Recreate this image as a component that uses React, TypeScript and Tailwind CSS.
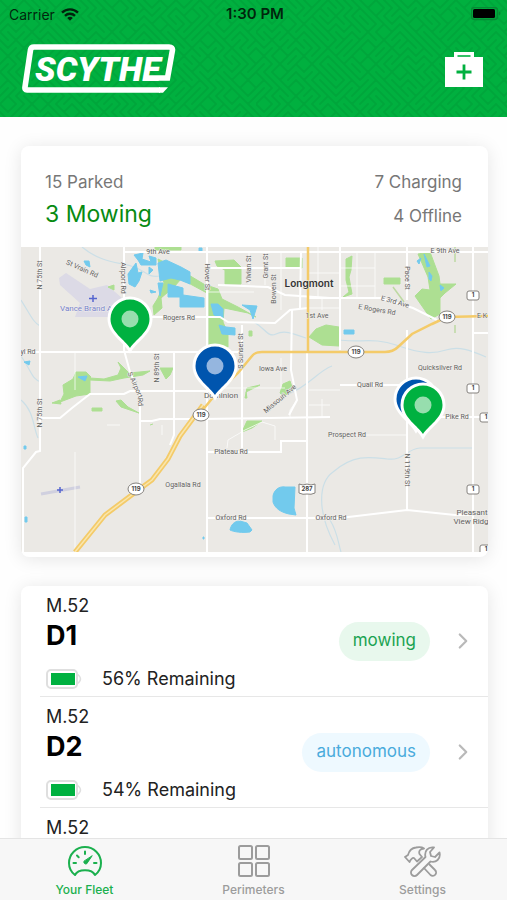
import { ChevronRight } from "lucide-react";
import { clsx } from "clsx";

interface Mower {
  unit: string;
  name?: string;
  battery?: number;
  status?: "mowing" | "autonomous";
}

const mowers: Mower[] = [
  { unit: "M.52", name: "D1", battery: 56, status: "mowing" },
  { unit: "M.52", name: "D2", battery: 54, status: "autonomous" },
  { unit: "M.52" },
];

const statusStyles = {
  mowing: "bg-[#e8f8ed] text-[#1ba352]",
  autonomous: "bg-[#eef9ff] text-[#49abdc]",
};

// [text, x, y, rotation]
const streets: [string, number, number, number][] = [
  ["9th Ave", 158, 252, 0],
  ["E 9th Ave", 445, 251, 0],
  ["St Vrain Rd", 82, 269, 24],
  ["N 75th St", 40, 275, -90],
  ["N 75th St", 40, 413, -90],
  ["Airport Rd", 123, 278, 90],
  ["Rogers Rd", 179, 318, 0],
  ["yl Rd", 28, 352, 0],
  ["N 89th St", 157, 368, -90],
  ["S Airport", 135, 385, 66],
  ["Rd", 140, 402, 85],
  ["Hover St", 207, 277, 90],
  ["Vivian St", 249, 269, -90],
  ["Grant St", 266, 266, -90],
  ["Bowen St", 274, 289, -90],
  ["S Sunset St", 241, 351, -90],
  ["1st Ave", 317, 316, 0],
  ["Iowa Ave", 273, 369, 0],
  ["Missouri Ave", 280, 399, -40],
  ["Pace St", 407, 278, 90],
  ["E 3rd Ave", 395, 302, 16],
  ["E Rogers Rd", 377, 310, 10],
  ["Quicksilver Rd", 440, 368, 0],
  ["Quail Rd", 370, 385, 0],
  ["Pike Rd", 457, 417, 0],
  ["Prospect Rd", 347, 435, 0],
  ["Plateau Rd", 231, 452, 0],
  ["Ogallala Rd", 183, 485, 0],
  ["Oxford Rd", 231, 518, 0],
  ["Oxford Rd", 331, 518, 0],
  ["N 119th St", 407, 470, 90],
  ["E K", 482, 316, 0],
];

const stateShields = [[201, 415], [136, 489], [356, 352], [447, 317]];
const countyShields = [[473, 295], [473, 388], [473, 489], [486, 417], [486, 549]];

// Maze of short diagonals, one stroke per cell
function mazePath(cols: number, rows: number, cell: number) {
  let seed = 29;
  let d = "";
  for (let r = 0; r < rows; r++) {
    for (let c = 0; c < cols; c++) {
      seed = (seed * 16807) % 2147483647;
      const x = c * cell;
      const y = r * cell;
      d += seed / 2147483647 < 0.5
        ? `M${x} ${y}l${cell} ${cell}`
        : `M${x + cell} ${y}l${-cell} ${cell}`;
    }
  }
  return d;
}

const maze = mazePath(32, 16, 8);

function StatusBar() {
  return (
    <div className="grid grid-cols-3 items-center h-7 pl-[9px] pr-[6px] text-[14px] text-black/80">
      <div className="flex items-center gap-[6px]">
        <span>Carrier</span>
        <svg width="18" height="13" viewBox="0 0 18 13" fill="none" stroke="currentColor" strokeWidth="2.4">
          <path d="M1 4.7C5.5.3 12.500.3 17 4.700" />
          <path d="M4 7.800C6.800 5 11.200 5 14 7.800" />
          <path d="M9 12.800L6.200 9.900C7.800 8.400 10.200 8.400 11.800 9.900Z" fill="currentColor" stroke="none" />
        </svg>
      </div>
      <span className="text-center text-[15px] font-semibold whitespace-nowrap">1:30 PM</span>
      <svg className="justify-self-end" width="30" height="14" viewBox="0 0 30 14">
        <rect x="0.500" y="0.500" width="26" height="12" rx="3" fill="none" stroke="#078935" strokeWidth="1.500" />
        <rect x="2" y="2" width="22" height="9" rx="1.500" fill="#000" />
        <path d="M28 4.500v4c2-.8 2-3.200 0-4" fill="#078935" />
      </svg>
    </div>
  );
}

function Logo() {
  return (
    <svg width="154" height="50" viewBox="0 0 154 50" role="img" aria-label="Scythe">
      <path
        d="M138 46H5Q2.500 46 3 43L8.500 6Q9 3 12 3H147Q151 3 150.400 6.500L145.500 34H124"
        fill="none"
        stroke="#fff"
        strokeWidth="5.600"
      />
      <path d="M137 43.200H146L141 48.800H137Z" fill="#fff" />
      <text
        x="13"
        y="37"
        fontFamily="Roboto, sans-serif"
        fontSize="34"
        fontWeight="900"
        fontStyle="italic"
        fill="#fff"
      >
        SCYTHE
      </text>
    </svg>
  );
}

function Header() {
  return (
    <header className="relative shrink-0 h-[117px] bg-[#00b03f] overflow-hidden">
      <svg className="absolute inset-0 w-full h-full" aria-hidden="true">
        <defs>
          <pattern id="maze" width="256" height="128" patternUnits="userSpaceOnUse">
            <path d={maze} stroke="#00a63b" strokeWidth="2" strokeLinecap="round" />
          </pattern>
        </defs>
        <rect width="100%" height="100%" fill="url(#maze)" />
      </svg>
      <div className="relative">
        <StatusBar />
        <div className="flex items-center justify-between pt-4 pl-[22px] pr-6">
          <Logo />
          <button type="button" aria-label="Service">
            <svg width="38" height="35" viewBox="0 0 38 35">
              <path d="M0 5H9V0H29V5H38V35H0Z" fill="#fff" />
              <path d="M12.500 4H25.500" stroke="#00b03f" strokeWidth="1.600" />
              <path d="M19 12.500V27.500M11.500 20H26.500" stroke="#00b03f" strokeWidth="2.800" />
            </svg>
          </button>
        </div>
      </div>
    </header>
  );
}

function Pin({ x, y, color, dot }: { x: number; y: number; color: string; dot: string }) {
  return (
    <g transform={`translate(${x} ${y})`}>
      <path
        d="M0 29C-5 21-19.500 13-19.500 0A19.500 19.500 0 0 1 19.500 0C19.500 13 5 21 0 29Z"
        fill={color}
        stroke="#fff"
        strokeWidth="6"
        paintOrder="stroke"
      />
      <circle r="8.500" fill={dot} />
    </g>
  );
}

function FleetMap() {
  return (
    <svg className="block w-full h-auto" viewBox="21 247 467 305" role="img" aria-label="Fleet map">
      <rect x="21" y="247" width="467" height="305" fill="#ebe9e5" />

      {/* airports */}
      <path d="M59 278L66 273L90 289L107 285L122 298L124 317H75L80 303L60 285Z" fill="#dcdae6" />
      <path d="M41 494L80 487" stroke="#d0d0df" strokeWidth="3" />
      <path d="M93 295v7M89 298.500h8M60 487v6M57 490h6" stroke="#5565cf" strokeWidth="1.500" />

      {/* streams */}
      <g fill="none" stroke="#cbdfe7" strokeWidth="1.200">
        <path d="M21 300C31 316 33 322 40 326M21 356C31 370 32 380 41 382M21 400C34 411 33 427 38 438" />
        <path d="M82 247C100 262 116 262 131 266S146 278 160 276" />
        <path d="M254 322C266 329 268 338 276 334S292 333 306 338M332 366C318 371 308 387 288 394M330 338C355 345 371 336 396 345S433 354 446 350S470 350 486 357" />
        <path d="M335 545C316 510 319 482 333 472C354 454 370 457 387 459S406 449 420 448H472M330 520C338 533 338 543 341 552" />
      </g>

      {/* parks */}
      <g fill="#addf92" stroke="#addf92" strokeWidth="1" strokeLinejoin="round">
        <path d="M155 247H181V250H155ZM158 259L182 271L207 286V293L181 279L174 287L161 298L162 308L154 315L153 306L158 298L164 283Z" />
        <path d="M215 261L234 260L241 267V284H225V270L217 266ZM286 258H302V268H286Z" />
        <path d="M209 286L218 289L222 299L238 307L256 317L248 313L224 308L223 322L228 334V347H209Z" />
        <path d="M346 259L352 256L351 270L349 277L352 294L343 297L349 292L346 280ZM384 278H400V284H384Z" />
        <path d="M418 254L430 252L439 276L440 284L456 284L445 293L440 298V314L431 319L415 296L422 289L430 290L428 277Z" />
        <path d="M309 337L316 329L326 325L339 327V346L322 345Z" />
        <path d="M73 379L76 372H86L91 377L90 378L104 379L118 375L121 368L118 362L126 370L129 373L150 371L143 375L124 378L110 381L90 380V394L76 396L60 402L64 394L63 385Z" />
        <path d="M160 368H173L170 375L166 379ZM108 287L114 285V290ZM52 403L60 400L61 404ZM92 408H102V411H92ZM116 401L121 407L139 413L128 407L121 400ZM150 425L153 424" />
        <path d="M283 384L290 381L293 390L284 396L280 393ZM247 388L260 385L246 392L247 398H245ZM242 432L247 421L262 421L252 428ZM249 331H252V336H249Z" />
      </g>
      <path d="M393 287L404 302M455 247V262M455 325V333" stroke="#bdd9a2" strokeWidth="1.500" />

      {/* water */}
      <g fill="#72caed" stroke="#72caed" strokeWidth="1" strokeLinejoin="round">
        <path d="M134 255L143 253L142 259L151 262L149 256L156 258V265L141 265L138 260ZM128 274L136 263L138 273L142 272L139 281L135 287L129 284Z" />
        <path d="M158 263L166 260L181 267L190 272V284L180 280L171 278L160 281ZM158 283H163L160 296ZM168 284L183 288V295L204 298V307H180V297H168Z" />
        <path d="M211 304L218 304L223 309V318L214 315ZM242 305L257 306L253 319L250 310ZM219 325L226 327L235 328V335L222 334Z" />
        <path d="M84 261L89 261L90 267L86 265ZM149 267L153 270L149 274ZM150 290L156 292L151 293Z" />
        <path d="M273 496C274 490 279 486 285 487L295 487L294 508L296 515L289 514C280 512 275 508 273 502ZM230 530C231 525 234 521 240 521L247 523L252 530L250 532C242 533 234 532 230 530Z" />
        <path d="M344 330H354V334H344ZM417 261L421 258L419 264ZM424 254L430 266L427 267ZM429 272L432 276L431 281L429 279ZM440 285L444 288L441 291Z" />
        <path d="M78 377L87 376L85 381ZM24 362L30 361L29 365ZM24 446h2v3h-2ZM25 517h2v5h-2ZM199 248h3v3h-3ZM203 537h1v2h-1Z" />
      </g>

      {/* local roads */}
      <g fill="none" stroke="#fff" strokeWidth="1" opacity=".75">
        <path d="M207 292H254M249 252V284M265 252V285M281 252V310M318 247V298M309 273H340M322 298V310M340 268H375M340 286H375M357 252V298M375 252V298M309 308H340" />
        <path d="M207 388H285M281 358V388M309 390H340M309 405H330M290 418V410L297 400M322 399V417M275 440V426L262 422L245 430L228 440L227 448M75 352V390M75 452V552M107 425H120M162 425V435M340 435H407" />
      </g>
      {/* arterials */}
      <g fill="none" stroke="#fff" strokeWidth="2">
        <path d="M40 247V451L36 452L23 468V552M21 352H243M124 247V350L130 372L142 400M124 252H488" />
        <path d="M174 352V435L170 445M140 400V489M140 421H152L160 419H201L330 417M207 247V552" />
        <path d="M40 418H60L72 408L90 394H124L130 391H210" />
        <path d="M124 317H220L228 322L275 323L290 310L308 308M218 285L268 287L285 295L330 298M207 268H301M301 252L300 308M292 310L291 370L297 400L289 415" />
        <path d="M242 325V448M207 452H281V441H306M307 352V552M340 247V350M308 298H380L413 308L437 320M407 247V300M407 330V510M473 247V552" />
        <path d="M473 333H488M340 385H400M430 417H488M207 518H340L407 510L455 515H473" />
      </g>

      {/* highways */}
      <g fill="none" stroke="#f4cb69">
        <path d="M308 247V352" strokeWidth="2.500" />
        <path d="M201 412L215 395L238 373L252 356Q255 352 262 352H385Q393 352 398 347L412 334L432 324L447 317L488 316" strokeWidth="2.500" />
        <path d="M75 552L105 515L133 494L152 480L168 459L180 436L203 405" strokeWidth="5" />
      </g>
      <path d="M75 552L105 515L133 494L152 480L168 459L180 436L203 405" fill="none" stroke="#f9e6ae" strokeWidth="1.500" />

      <g
        fontFamily="Roboto, sans-serif"
        fontSize="7"
        fill="#62625f"
        stroke="#f1efec"
        strokeWidth="1"
        paintOrder="stroke"
        textAnchor="middle"
      >
        {streets.map(([name, x, y, angle], i) => (
          <text key={i} transform={`translate(${x} ${y}) rotate(${angle})`} dy="2">
            {name}
          </text>
        ))}
        <text x="60" y="311" fontSize="8" fill="#7682cc" textAnchor="start">Vance Brand Airport</text>
        <text x="221" y="398" fontSize="8">Dominion</text>
        <text x="472" y="515" fontSize="8">Pleasant</text>
        <text x="471" y="524" fontSize="8">View Ridg</text>
        <text x="309" y="287" fontFamily="Inter, sans-serif" fontSize="10" fontWeight="600" fill="#333">Longmont</text>
      </g>

      <g
        fill="#fff"
        stroke="#85827e"
        strokeWidth="1"
        fontFamily="Inter, sans-serif"
        fontSize="6"
        fontWeight="700"
        textAnchor="middle"
      >
        {stateShields.map(([x, y]) => (
          <g key={`${x}-${y}`}>
            <ellipse cx={x} cy={y} rx="8" ry="6" />
            <text x={x} y={y + 2} fill="#444" stroke="none">119</text>
          </g>
        ))}
        {countyShields.map(([x, y]) => (
          <g key={`${x}-${y}`}>
            <rect x={x - 6} y={y - 4} width="12" height="9" rx="2" />
            <text x={x} y={y + 2} fill="#444" stroke="none">1</text>
          </g>
        ))}
        <path d="M299 484Q303 486 307 484Q311 486 315 484V493Q311 495 307 494Q303 495 299 493Z" />
        <text x="307" y="491" fill="#444" stroke="none">287</text>
      </g>

      <Pin x={130} y={319} color="#00b140" dot="#97deae" />
      <Pin x={215} y={366} color="#0055ae" dot="#95b6df" />
      <Pin x={416} y={399} color="#0055ae" dot="#95b6df" />
      <Pin x={423} y={405} color="#00b140" dot="#97deae" />
    </svg>
  );
}

function BatteryIcon() {
  return (
    <svg width="36" height="22" viewBox="0 0 36 22" aria-hidden="true">
      <path d="M31 6Q38 11 31 16" fill="#fff" stroke="#dfdfdf" strokeWidth="1.500" />
      <rect x="1" y="2" width="30" height="18" rx="4" fill="#fff" stroke="#dfdfdf" strokeWidth="2" />
      <rect x="5" y="5" width="24" height="12" fill="#00b140" />
    </svg>
  );
}

function MowerRow({ mower }: { mower: Mower }) {
  return (
    <li className="ml-[19px] h-[111px] border-b border-[#e7e7e7]">
      <a href="#mower" className="flex items-center h-full pl-[6px] pr-3">
        <div className="flex-1 self-stretch pt-2">
          <p className="text-[18px] leading-6 text-[#222]">{mower.unit}</p>
          {mower.name && <h2 className="mt-[2px] text-[27px] leading-8 font-bold">{mower.name}</h2>}
          {mower.battery && (
            <div className="flex items-center gap-5 mt-[15px] text-[#222]">
              <BatteryIcon />
              <span className="text-[18px] leading-6 whitespace-nowrap">{mower.battery}% Remaining</span>
            </div>
          )}
        </div>
        {mower.status && (
          <>
            <span
              className={clsx(
                "flex items-center h-[39px] px-[14px] rounded-full text-[17px]",
                statusStyles[mower.status]
              )}
            >
              {mower.status}
            </span>
            <ChevronRight className="ml-5 w-[26px] h-[26px] text-[#b9b9b9]" strokeWidth={2} />
          </>
        )}
      </a>
    </li>
  );
}

function GaugeIcon() {
  return (
    <svg width="34" height="30" viewBox="0 0 34 30" fill="none" stroke="currentColor" strokeWidth="2" strokeLinecap="round" strokeLinejoin="round">
      <path d="M7 29C3 26 1 22 1 17A16 16 0 0 1 33 17C33 22 31 26 27 29C24 22.500 10 22.500 7 29Z" />
      <path d="M5.500 17H8M26 17H28.500M17 5.500V8M9 9.500L10.700 11.200" />
      <path d="M24 10L18.700 17.800A2 2 0 0 1 15.900 15.500Z" fill="currentColor" strokeWidth="1" />
    </svg>
  );
}

function GridIcon() {
  return (
    <svg width="34" height="32" viewBox="0 0 34 32" fill="none" stroke="currentColor" strokeWidth="2">
      <rect x="2" y="1" width="13" height="13" rx="1.500" />
      <rect x="19" y="1" width="13" height="13" rx="1.500" />
      <rect x="2" y="18" width="13" height="13" rx="1.500" />
      <rect x="19" y="18" width="13" height="13" rx="1.500" />
    </svg>
  );
}

function ToolsIcon() {
  return (
    <svg width="37" height="31" viewBox="0 0 37 31" fill="none" stroke="currentColor" strokeWidth="1.800" strokeLinejoin="round">
      <path d="M1 11L4 9C5 5 8 2 12 1.500C15 1 18 1 20 2.500C16 3 14.500 5 15.500 8L18 11L13 15.500L10 12C8 11.500 7 13 5.500 16Z" />
      <path d="M25 18L31 24A3.300 3.300 0 0 1 26.500 29L19.500 21.500" />
      <path d="M8 24L21.500 11C20 5 24 .5 30 1.500L26 6L27 10L31 11L35.500 6.500C37 13 32 17 26.500 15.500L13 29A3.400 3.400 0 0 1 8 24Z" />
    </svg>
  );
}

const tabs = [
  { label: "Your Fleet", icon: GaugeIcon, active: true },
  { label: "Perimeters", icon: GridIcon, active: false },
  { label: "Settings", icon: ToolsIcon, active: false },
];

export default function App() {
  return (
    <div className="flex flex-col h-screen bg-[#fefefe] text-black overflow-hidden font-[Inter,sans-serif]">
      <Header />

      <main className="flex-1 min-h-0 overflow-hidden pl-[21px] pr-[19px] pt-[29px] space-y-[29px]">
        <section className="bg-white rounded-lg shadow-[0_2px_18px_rgba(0,0,0,0.1)] overflow-hidden pb-[5px]">
          <div className="flex justify-between h-[101px] pl-6 pr-[26px] pt-6 text-[17px] leading-6 text-[#777]">
            <div>
              <p>15 Parked</p>
              <p className="mt-1 text-[23px] leading-8 text-[#078b12]">3 Mowing</p>
            </div>
            <div className="text-right space-y-[10px]">
              <p>7 Charging</p>
              <p>4 Offline</p>
            </div>
          </div>
          <FleetMap />
        </section>

        <ul className="bg-white rounded-lg shadow-[0_2px_18px_rgba(0,0,0,0.1)]">
          {mowers.map((mower, i) => (
            <MowerRow key={i} mower={mower} />
          ))}
        </ul>
      </main>

      <nav className="relative shrink-0 grid grid-cols-3 h-[62px] bg-[#f7f7f7] border-t border-[#e4e4e4]">
        {tabs.map(({ label, icon: Icon, active }) => (
          <a
            key={label}
            href="#tab"
            className={clsx(
              "flex flex-col items-center pt-[6px] text-[12px] leading-4 font-medium",
              active ? "text-[#1bb04e]" : "text-[#9c9c9c]"
            )}
          >
            <span className="flex items-center h-8">
              <Icon />
            </span>
            <span className="mt-[5px]">{label}</span>
          </a>
        ))}
      </nav>
    </div>
  );
}
